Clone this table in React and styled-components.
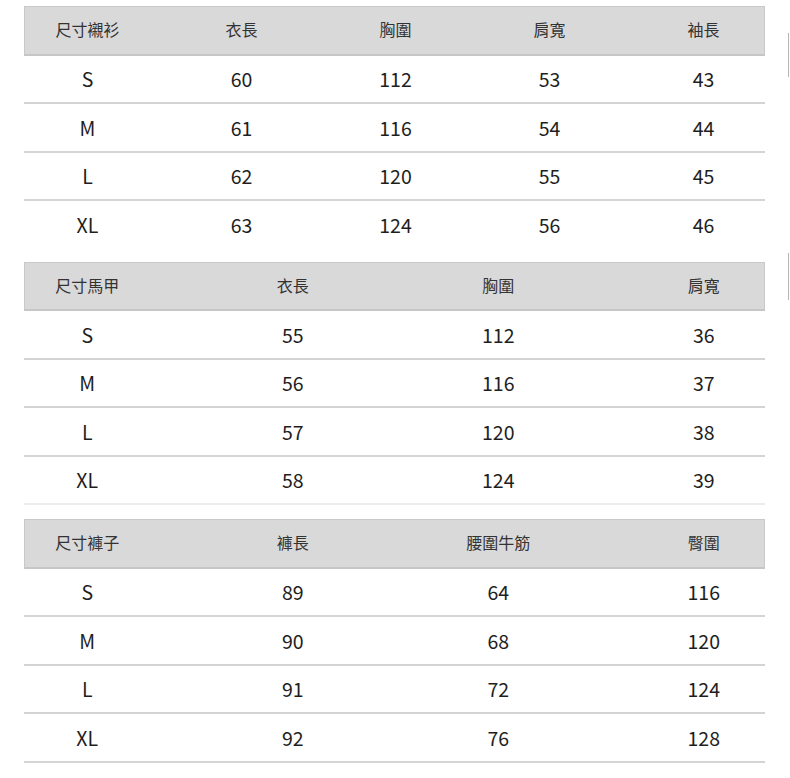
import React from "react";
import styled, { createGlobalStyle } from "styled-components";

const Global = createGlobalStyle`
  html, body { margin: 0; padding: 0; background: #ffffff; }
  body {
    font-family: "Noto Sans CJK TC", "Noto Sans", sans-serif;
    color: #222;
  }
`;

const Page = styled.div`
  display: flex;
  width: 790px;
  height: 778px;
  overflow: hidden;
  padding-top: 6px;
  box-sizing: border-box;
`;

const Tables = styled.div`
  display: flex;
  flex-direction: column;
  margin-left: 24px;
  width: 741px;
`;

const Table = styled.div`
  display: flex;
  flex-direction: column;
  margin-bottom: ${(p) => p.$gap}px;
`;

const Row = styled.div`
  display: grid;
  grid-template-columns: repeat(${(p) => p.$cols}, ${(p) => p.$colw}px);
  justify-content: center;
  align-items: center;
  padding-left: 2px;
  box-sizing: border-box;
  height: 48.5px;
  border-bottom: 2px solid ${(p) => p.$line};
`;

const HeadRow = styled(Row)`
  height: 49.5px;
  background: #d9d9d9;
  border: 1px solid #c9c9c9;
  border-bottom: 2px solid #c6c6c6;
  padding-bottom: 2px;
`;

const HeadCell = styled.div`
  text-align: center;
  font-size: 16px;
  color: #333;
  font-weight: 400;
  line-height: 1;
`;

const Cell = styled.div`
  text-align: center;
  font-size: 19.5px;
  color: #1e1e1e;
  line-height: 1;
  font-family: "Noto Sans CJK TC", "Noto Sans", sans-serif;
`;

const Side = styled.div`
  flex: 1;
  display: flex;
  flex-direction: column;
  align-items: flex-end;
  padding-right: 1px;
`;

const SideBar = styled.div`
  width: 1.5px;
  height: ${(p) => p.$h}px;
  margin-top: ${(p) => p.$top}px;
  background: #b5b5b5;
`;

const tables = [
  {
    head: ["尺寸襯衫", "衣長", "胸圍", "肩寬", "袖長"],
    rows: [
      ["S", "60", "112", "53", "43"],
      ["M", "61", "116", "54", "44"],
      ["L", "62", "120", "55", "45"],
      ["XL", "63", "124", "56", "46"],
    ],
    colw: 154,
    last: "transparent",
    gap: 12,
  },
  {
    head: ["尺寸馬甲", "衣長", "胸圍", "肩寬"],
    rows: [
      ["S", "55", "112", "36"],
      ["M", "56", "116", "37"],
      ["L", "57", "120", "38"],
      ["XL", "58", "124", "39"],
    ],
    colw: 205.5,
    last: "#ececec",
    gap: 14,
  },
  {
    head: ["尺寸褲子", "褲長", "腰圍牛筋", "臀圍"],
    rows: [
      ["S", "89", "64", "116"],
      ["M", "90", "68", "120"],
      ["L", "91", "72", "124"],
      ["XL", "92", "76", "128"],
    ],
    colw: 205.5,
    last: "#d4d4d4",
    gap: 0,
  },
];

export default function App() {
  return (
    <>
      <Global />
      <Page>
        <Tables>
          {tables.map((t, ti) => (
            <Table key={ti} $gap={t.gap}>
              <HeadRow $cols={t.head.length} $colw={t.colw} $line="#c6c6c6">
                {t.head.map((h, i) => (
                  <HeadCell key={i}>{h}</HeadCell>
                ))}
              </HeadRow>
              {t.rows.map((r, ri) => (
                <Row
                  key={ri}
                  $cols={t.head.length}
                  $colw={t.colw}
                  $line={ri === t.rows.length - 1 ? t.last : "#d4d4d4"}
                >
                  {r.map((c, ci) => (
                    <Cell key={ci}>{c}</Cell>
                  ))}
                </Row>
              ))}
            </Table>
          ))}
        </Tables>
        <Side>
          <SideBar $top={27} $h={44} />
          <SideBar $top={176} $h={47} />
        </Side>
      </Page>
    </>
  );
}
